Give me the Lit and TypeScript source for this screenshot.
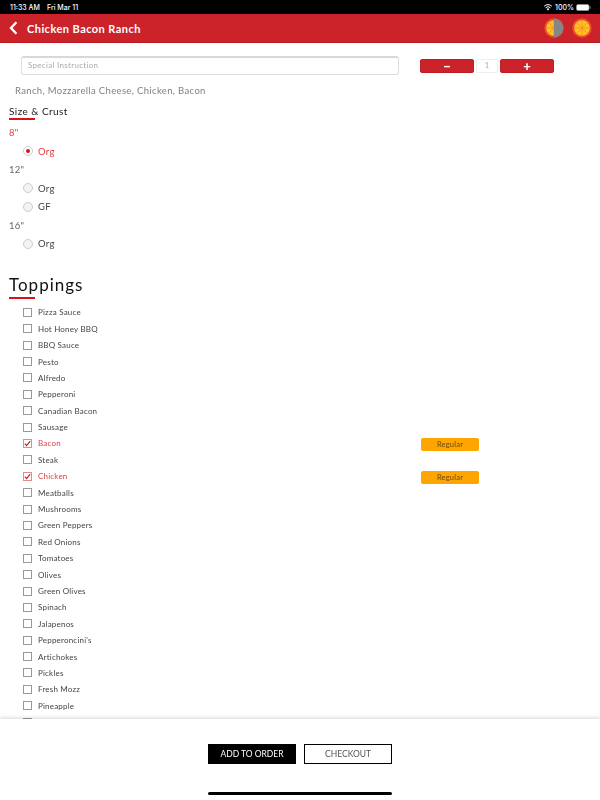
import {LitElement, html, css, svg} from 'lit';
import {customElement} from 'lit/decorators.js';

const TOPPINGS = [
  'Pizza Sauce', 'Hot Honey BBQ', 'BBQ Sauce', 'Pesto', 'Alfredo', 'Pepperoni',
  'Canadian Bacon', 'Sausage', 'Bacon', 'Steak', 'Chicken', 'Meatballs',
  'Mushrooms', 'Green Peppers', 'Red Onions', 'Tomatoes', 'Olives', 'Green Olives',
  'Spinach', 'Jalapenos', "Pepperoncini's", 'Artichokes', 'Pickles', 'Fresh Mozz',
  'Pineapple', 'Banana Peppers',
];
const SELECTED = ['Bacon', 'Chicken'];

const SIZES = [
  {name: '8"', active: true, crusts: [{name: 'Org', checked: true}]},
  {name: '12"', active: false, crusts: [{name: 'Org', checked: false}, {name: 'GF', checked: false}]},
  {name: '16"', active: false, crusts: [{name: 'Org', checked: false}]},
];

// orange slice, half: left half only, the right is grey
const slice = (half: boolean) => html`
  <svg width="20" height="20" viewBox="0 0 20 20">
    <circle cx="10" cy="10" r="9.7" fill="#ee4f2b"></circle>
    <circle cx="10" cy="10" r="7.8" fill="#ffc226"></circle>
    ${[0, 45, 90, 135].map(
      (a) => svg`<line x1="10" y1="2.2" x2="10" y2="17.8" stroke="#f5851f" stroke-width=".7" transform="rotate(${a} 10 10)"></line>`
    )}
    ${half ? svg`<path d="M10 .6a9.4 9.4 0 0 1 0 18.8z" fill="#868686"></path>` : ''}
  </svg>
`;

@customElement('app-root')
export class AppRoot extends LitElement {
  static styles = css`
    :host {
      display: flex;
      flex-direction: column;
      width: 600px;
      height: 800px;
      overflow: hidden;
      background: #fff;
      font-family: Lato, 'Open Sans', sans-serif;
      color: #222;
    }
    .status {
      flex: none;
      height: 14px;
      background: #000;
      color: #fff;
      font-size: 7px;
      display: flex;
      align-items: center;
      padding: 0 9px 0 10px;
      font-family: Inter, sans-serif;
      font-weight: 500;
    }
    .status .date {
      margin-left: 7px;
    }
    .status .right {
      margin-left: auto;
      display: flex;
      align-items: center;
      gap: 2px;
    }
    .header {
      flex: none;
      height: 28px;
      background: #cc2229;
      border-bottom: 1px solid #b81c22;
      display: flex;
      align-items: center;
      padding: 0 8px 0 9px;
      color: #fff;
    }
    .header .title {
      margin-left: 9px;
      font-size: 11px;
      font-weight: 700;
      letter-spacing: 0.45px;
    }
    .header .icons {
      margin-left: auto;
      display: flex;
      gap: 8px;
    }
    .content {
      flex: 1;
      min-height: 0;
      overflow: hidden;
      will-change: transform; /* grey text antialiasing, like the reference */
    }
    .instruction-row {
      display: flex;
      align-items: center;
      padding: 13px 0 0 21px;
    }
    .instruction {
      box-sizing: border-box;
      width: 378px;
      height: 19px;
      border: 1px solid #ddd;
      border-top: 2px solid #d8d8d8;
      border-radius: 3px;
      padding: 0 0 2px 6px;
      font-size: 8px;
      letter-spacing: 0.3px;
      color: #aaa;
      display: flex;
      align-items: center;
    }
    .stepper {
      margin-left: 21px;
      display: flex;
      align-items: center;
      gap: 2px;
    }
    .step {
      box-sizing: border-box;
      width: 54px;
      height: 14px;
      background: #cc2229;
      border: 1px solid #bd1f26;
      border-radius: 2px;
      color: #fff;
      font-weight: 900;
      font-size: 13px;
      line-height: 12px;
      text-align: center;
    }
    .qty {
      box-sizing: border-box;
      width: 22px;
      height: 14px;
      border: 1px solid #eee;
      border-radius: 2px;
      font-size: 7.5px;
      color: #aaa;
      display: flex;
      align-items: center;
      justify-content: center;
    }
    .desc {
      margin: 10px 0 0 15px;
      font-size: 9.5px;
      line-height: 12px;
      letter-spacing: 0.35px;
      color: #808080;
    }
    .section {
      margin: 8px 0 0 9px;
      font-size: 10px;
      line-height: 13px;
      letter-spacing: 0.45px;
      color: #222;
    }
    .rule {
      width: 26px;
      height: 2px;
      background: #d8121b;
      margin-left: 9px;
    }
    .rule.big {
      margin-top: 2px;
    }
    .sizes {
      margin-top: 7px;
    }
    .size {
      margin-left: 9px;
      font-size: 9.5px;
      line-height: 12px;
      height: 12px;
      letter-spacing: 0.3px;
      color: #666;
    }
    .size.active,
    .crust.active {
      color: #df3d43;
    }
    .crust {
      display: flex;
      align-items: center;
      height: 18.3px;
      padding-left: 23px;
      font-size: 9.5px;
      letter-spacing: 0.3px;
      color: #444;
      gap: 5px;
    }
    .size-block {
      margin-bottom: 3.85px;
    }
    .size-block .crusts {
      margin-top: 3px;
    }
    .radio {
      box-sizing: border-box;
      width: 10px;
      height: 10px;
      border-radius: 50%;
      border: 1px solid #ccc;
      background: #f3f3f3;
      display: flex;
      align-items: center;
      justify-content: center;
    }
    .crust.active .radio {
      background: #fff;
    }
    .radio i {
      width: 4px;
      height: 4px;
      border-radius: 50%;
      background: #d8121b;
    }
    h2 {
      margin: 22px 0 0 9px;
      font-weight: 400;
      font-size: 17px;
      line-height: 20px;
      letter-spacing: 1px;
      color: #111;
    }
    .toppings {
      margin-top: 5.3px;
    }
    .topping {
      display: grid;
      grid-template-columns: 15px 383px 58px;
      align-items: center;
      height: 16.4px;
      padding-left: 23px;
      font-size: 8px;
      letter-spacing: 0.2px;
      color: #444;
    }
    .topping.active {
      color: #df3d43;
    }
    .box {
      box-sizing: border-box;
      width: 9px;
      height: 9px;
      border: 1px solid #999;
      background: #fff;
    }
    .topping.active .box {
      border-color: #e08b8f;
      display: flex;
      align-items: center;
      justify-content: center;
    }
    .pill {
      height: 13px;
      margin-top: 2px;
      border-radius: 2px;
      background: #ffa500;
      color: #6b4a10;
      font-size: 7.5px;
      line-height: 13px;
      text-align: center;
    }
    .footer {
      flex: none;
      height: 81px;
      background: #fff;
      box-shadow: 0 -1px 4px rgba(0, 0, 0, 0.16);
      display: flex;
      flex-direction: column;
      align-items: center;
      z-index: 1;
    }
    .actions {
      display: flex;
      gap: 8px;
      margin-top: 25px;
    }
    .btn {
      box-sizing: border-box;
      width: 88px;
      height: 20px;
      font-size: 8.5px;
      line-height: 18px;
      text-align: center;
      border: 1px solid #000;
    }
    .btn.primary {
      background: #000;
      color: #fff;
    }
    .btn.secondary {
      background: #fff;
      color: #555;
    }
    .home {
      width: 184px;
      height: 3px;
      background: #000;
      border-radius: 2px;
      margin-top: 28px;
    }
  `;

  render() {
    return html`
      <div class="status">
        <span>11:33 AM</span><span class="date">Fri Mar 11</span>
        <div class="right">
          <svg width="10" height="8" viewBox="0 0 10 8">
            <path d="M5 7.5 3.6 6a2 2 0 0 1 2.8 0z" fill="#fff"></path>
            <path d="M2.6 4.8a3.4 3.4 0 0 1 4.8 0M1.2 3.2a5.4 5.4 0 0 1 7.6 0" fill="none" stroke="#fff" stroke-width="1"></path>
          </svg>
          <span>100%</span>
          <svg width="15" height="7" viewBox="0 0 15 7">
            <rect x=".5" y=".5" width="12.5" height="6" rx="1.5" fill="#fff" stroke="#999" stroke-width=".6"></rect>
            <rect x="13.6" y="2.3" width="1" height="2.4" fill="#888"></rect>
          </svg>
        </div>
      </div>
      <div class="header">
        <svg width="9" height="14" viewBox="0 0 9 14">
          <path d="M7.4 1.2 2 7l5.4 5.8" fill="none" stroke="#fff" stroke-width="2.4"></path>
        </svg>
        <span class="title">Chicken Bacon Ranch</span>
        <div class="icons">${slice(true)}${slice(false)}</div>
      </div>
      <div class="content">
        <div class="instruction-row">
          <div class="instruction">Special Instruction</div>
          <div class="stepper">
            <div class="step">−</div>
            <div class="qty">1</div>
            <div class="step">+</div>
          </div>
        </div>
        <div class="desc">Ranch, Mozzarella Cheese, Chicken, Bacon</div>
        <div class="section">Size &amp; Crust</div>
        <div class="rule"></div>
        <div class="sizes">
          ${SIZES.map(
            (s) => html`
              <div class="size-block">
                <div class="size ${s.active ? 'active' : ''}">${s.name}</div>
                <div class="crusts">
                  ${s.crusts.map(
                    (c) => html`
                      <div class="crust ${c.checked ? 'active' : ''}">
                        <span class="radio">${c.checked ? html`<i></i>` : ''}</span>
                        ${c.name}
                      </div>
                    `
                  )}
                </div>
              </div>
            `
          )}
        </div>
        <h2>Toppings</h2>
        <div class="rule big"></div>
        <div class="toppings">
          ${TOPPINGS.map((t) => {
            const on = SELECTED.includes(t);
            return html`
              <div class="topping ${on ? 'active' : ''}">
                <span class="box">
                  ${on
                    ? html`<svg width="7" height="7" viewBox="0 0 7 7">
                        <path d="M.8 3.6 2.6 5.6 6.2 1.2" fill="none" stroke="#d8121b" stroke-width="1.1"></path>
                      </svg>`
                    : ''}
                </span>
                <span>${t}</span>
                ${on ? html`<span class="pill">Regular</span>` : ''}
              </div>
            `;
          })}
        </div>
      </div>
      <div class="footer">
        <div class="actions">
          <div class="btn primary">ADD TO ORDER</div>
          <div class="btn secondary">CHECKOUT</div>
        </div>
        <div class="home"></div>
      </div>
    `;
  }
}
